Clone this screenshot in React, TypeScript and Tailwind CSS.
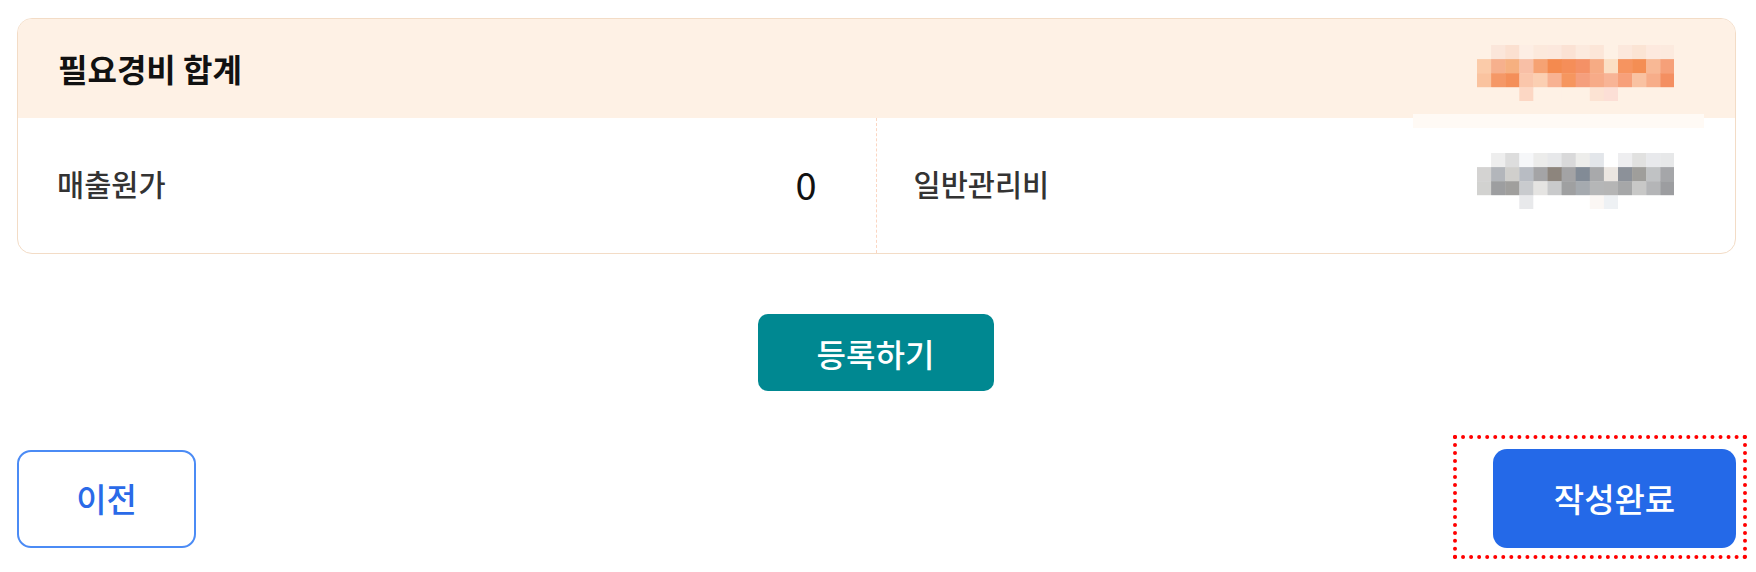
import React from "react";

const H = "#fef1e5";
const headerMosaic: string[][] = [
  [H, "#fbe6da", "#fbe0d0", "#fdeee4", "#fce9dc", "#fce8dd", "#fbe2d4", "#fceade", "#fce6d8", H, "#fce8dc", "#fbe4d4", "#fde9de", "#fceade"],
  ["#fbcba9", "#f6b08d", "#f6b080", "#f8bfa6", "#f6a273", "#f48a4f", "#f58e59", "#f49166", "#f6ab84", "#fbdfc4", "#f69460", "#f48e54", "#f8b895", "#f6a079"],
  ["#fac39f", "#f59867", "#f48f59", "#fac6ab", "#fbcfb2", "#f8b292", "#f6965f", "#f59f7d", "#f7ab88", "#f8b496", "#f7a07a", "#f9c2a2", "#f7ad89", "#f48f61"],
  [H, H, H, "#fcd7c4", H, H, H, H, "#fce3d3", "#fcdfd6", H, H, H, H],
];
const W = "#ffffff";
const greyMosaic: string[][] = [
  [W, "#eeeeee", "#dddddd", "#f6f7f9", "#ececeb", "#e7e8ea", "#d9d9da", "#ededeb", "#e3e6ea", W, "#eeeef0", "#e1e1e0", "#e8e9ec", "#e7e8e9"],
  ["#d4d3d2", "#b3b6bb", "#d0cfcc", "#b8bcc3", "#a4a4a6", "#8d857d", "#a3a3a5", "#828b96", "#a8a9ab", "#ebe6e1", "#8c9199", "#9f9e9b", "#c0c2c4", "#a5a6a9"],
  ["#d2d2d0", "#9d9ea0", "#a09f9d", "#c9cbce", "#e5e4e2", "#c9cacb", "#9fa0a1", "#a5aaaf", "#b5b6b7", "#b5b5b5", "#a6a7a8", "#c8c8c7", "#b4b5b7", "#9c9da0"],
  [W, W, W, "#e8e9eb", W, W, W, W, "#fbf7f4", "#eef1f4", W, W, W, W],
];

function Mosaic({ data }: { data: string[][] }) {
  const s = 14.1;
  return (
    <svg width={197} height={56} viewBox="0 0 197 56" className="block" aria-hidden>
      {data.map((row, r) =>
        row.map((c, i) => (
          <rect key={`${r}-${i}`} x={i * s} y={r * s} width={s + 0.4} height={s + 0.4} fill={c} />
        ))
      )}
    </svg>
  );
}

export default function App() {
  const font = { fontFamily: '"Noto Sans CJK KR", "Noto Sans", sans-serif' };
  return (
    <div className="w-[1756px] h-[572px] bg-white pl-[17px] pr-[20px] pt-[18px]" style={font}>
      {/* Card */}
      <div className="relative w-[1719px] rounded-[15px] border border-[#f3dcc6] overflow-hidden">
        <div className="h-[99px] bg-[#fef1e5] flex items-center justify-between pl-[40px] pr-[61px]">
          <span className="text-[32px] font-bold text-[#111111] leading-none -mt-[2px]">필요경비 합계</span>
          <div className="mt-[8px]">
            <Mosaic data={headerMosaic} />
          </div>
        </div>
        <div className="grid grid-cols-2 h-[135px]">
          <div className="flex items-center justify-between pl-[39px] pr-[59px] border-r border-dashed border-[#fbd6c2]">
            <span className="text-[29.5px] font-medium text-[#333333] leading-none -mt-[4px]">매출원가</span>
            <span className="text-[38px] text-[#111111] leading-none -mt-[4px]">0</span>
          </div>
          <div className="flex items-center justify-between pl-[37px] pr-[61px]">
            <span className="text-[29.5px] font-medium text-[#333333] leading-none -mt-[4px]">일반관리비</span>
            <div className="-mt-[10px]">
              <Mosaic data={greyMosaic} />
            </div>
          </div>
        </div>
        <div className="absolute left-[1395px] top-[95px] w-[291px] h-[14px] bg-[#fffaf5]" />
      </div>

      {/* Register */}
      <div className="flex justify-center mt-[60px] pr-[2px]">
        <button className="w-[236px] h-[77px] rounded-[10px] bg-[#008891] text-white text-[32px] font-medium leading-none">
          등록하기
        </button>
      </div>

      {/* Bottom row */}
      <div className="flex justify-between items-center mt-[58px] w-[1719px]">
        <button className="w-[179px] h-[98px] rounded-[14px] border-2 border-[#4b8bf5] bg-white text-[#2a6ae8] text-[33px] font-medium leading-none">
          이전
        </button>
        <div className="relative">
          <button className="w-[243px] h-[99px] rounded-[14px] bg-[#2469e8] text-white text-[33px] font-medium leading-none">
            작성완료
          </button>
          <div className="absolute left-[-40px] top-[-14px] right-[-11px] bottom-[-11px] border-[4px] border-dotted border-[#ff0000] pointer-events-none" />
        </div>
      </div>
    </div>
  );
}
